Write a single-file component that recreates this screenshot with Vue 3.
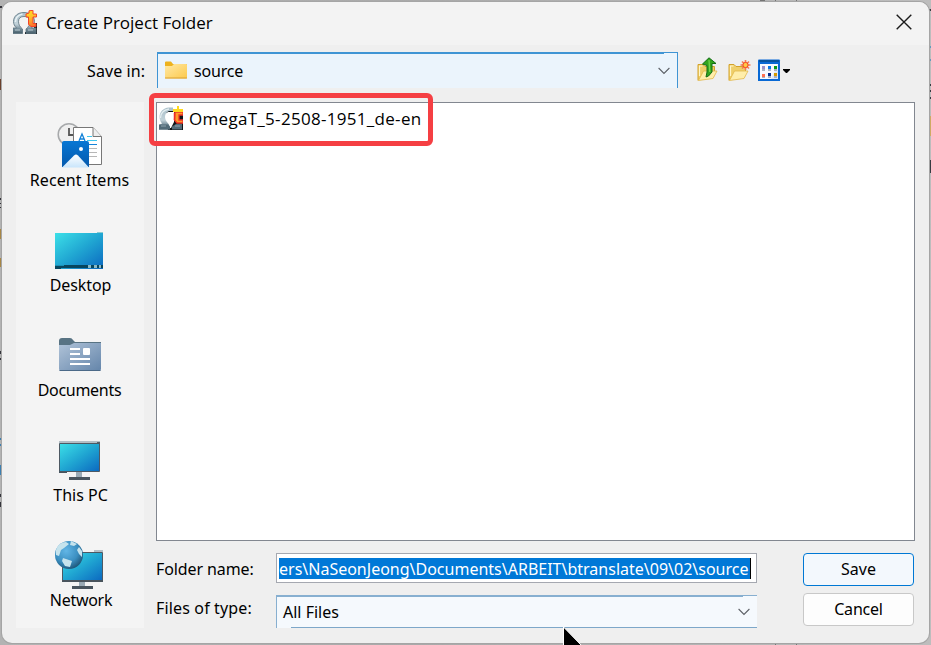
<script setup>
import { ref } from 'vue'

const places = [
  { id: 'recent', label: 'Recent Items' },
  { id: 'desktop', label: 'Desktop' },
  { id: 'documents', label: 'Documents' },
  { id: 'pc', label: 'This PC' },
  { id: 'network', label: 'Network' },
]
const folder = ref('source')
const path = ref('ers\\NaSeonJeong\\Documents\\ARBEIT\\btranslate\\09\\02\\source')
</script>

<template>
  <div class="screen">
    <svg class="backdrop" width="931" height="645" viewBox="0 0 931 645" aria-hidden="true">
      <path d="M0 6h2v2H0zM0 198h2v2H0zM0 203h2v1H0zM0 207h2v1H0zM0 351h2v3H0zM0 358h2v2H0zM0 494h2v3H0zM0 502h2v5H0z" fill="#34343b" />
      <path d="M0 79h2v11H0z" fill="#6b402c" />
      <path d="M0 229h2v10H0zM0 258h2v9H0z" fill="#a78645" />
      <path d="M0 438h1v2H0zM0 444h1v2H0zM0 465h1v10H0z" fill="#3d7fb0" />
      <path d="M929 9h2v2h-2zM929 84h2v2h-2zM929 90h2v2h-2zM929 97h2v2h-2zM929 160h2v13h-2z" fill="#373c42" />
      <path d="M929 46h2v2h-2zM929 59h2v2h-2z" fill="#6699bc" />
      <path d="M929 116h2v20h-2z" fill="#cfaa63" />
      <path d="M760 0h5v2h-5zM775 0h1v2h-1zM796 0h1v2h-1zM775 643h1v2h-1zM796 643h1v2h-1z" fill="#747474" />
    </svg>

    <svg class="defs" width="0" height="0" aria-hidden="true">
      <defs>
        <linearGradient id="screenFill" x1="0" y1="0" x2="1" y2="1">
          <stop offset="0" stop-color="#3ce0e8" /><stop offset=".5" stop-color="#20a6d2" /><stop offset="1" stop-color="#0b68c0" />
        </linearGradient>
        <linearGradient id="folderFill" x1="0" y1="0" x2="1" y2="1">
          <stop offset="0" stop-color="#ffe9a6" /><stop offset="1" stop-color="#fcc94c" />
        </linearGradient>
        <linearGradient id="docFill" x1="0" y1="0" x2="1" y2="1">
          <stop offset="0" stop-color="#b0c3d8" /><stop offset="1" stop-color="#6485aa" />
        </linearGradient>
        <linearGradient id="photoFill" x1="0" y1="0" x2="0" y2="1">
          <stop offset="0" stop-color="#0877d4" /><stop offset="1" stop-color="#0559ad" />
        </linearGradient>
        <linearGradient id="hillFill" x1="0" y1="0" x2="0" y2="1">
          <stop offset="0" stop-color="#ffffff" /><stop offset="1" stop-color="#c9e5fb" />
        </linearGradient>
        <radialGradient id="globeFill" cx=".4" cy=".35" r=".7">
          <stop offset="0" stop-color="#62b6e6" /><stop offset=".6" stop-color="#3b8fc1" /><stop offset="1" stop-color="#1d5273" />
        </radialGradient>
        <linearGradient id="omegaFill" gradientUnits="userSpaceOnUse" x1="0" y1="2" x2="0" y2="24">
          <stop offset="0" stop-color="#a9bfca" /><stop offset=".55" stop-color="#c3d3da" /><stop offset=".75" stop-color="#7c929e" /><stop offset="1" stop-color="#3f5763" />
        </linearGradient>
        <linearGradient id="tFill" gradientUnits="userSpaceOnUse" x1="15" y1="0" x2="22" y2="17">
          <stop offset="0" stop-color="#ffe21a" /><stop offset=".4" stop-color="#ffc02a" /><stop offset="1" stop-color="#f8622a" />
        </linearGradient>
        <symbol id="openFolder" viewBox="0 0 24 24">
          <path d="M1 21.500V5.500h5l2 2h9.500v5" fill="#efcf69" stroke="#d3a129" />
          <path d="M1.500 21.500l5-9.500H20l-4 7.500z" fill="#ffeeaa" stroke="#e2b84a" stroke-width=".8" />
          <path d="M2.500 17V7h3" fill="none" stroke="#fff5c9" stroke-width="1.200" />
        </symbol>
      </defs>
    </svg>

    <main class="dialog">
      <header class="titlebar">
        <svg class="app-icon" width="24" height="24" viewBox="0 0 24 24">
          <path d="M21 13h3v11H12v-2h9z" fill="#15181b" />
          <path d="M0 23.500V18h3.500C1.500 16 .5 14 .5 11.500.5 6 5 2.500 11 2.500S21.500 6 21.500 11.500c0 2.500-1 4.500-3 6.500H23v5.500H13V19c2.500-2 4-4.500 4-7.500 0-3.500-2.500-5-6-5s-5.500 1.500-5.500 5c0 3 1.500 5.500 4 7.500v4.500z" fill="url(#omegaFill)" stroke="#59717d" stroke-width=".8" />
          <path d="M2.500 12c0-4 2.500-7 7-8" fill="none" stroke="#e8f1f4" stroke-width="1.400" />
          <path d="M2 20h5M15 20h5" stroke="#bccdd4" stroke-width="1.200" />
          <path d="M16 3V.8l4-.5V4h3.500v3H20v6.500h3v3h-5l-2.500-2V7H13V4z" fill="url(#tFill)" stroke="#f3432a" stroke-width="1" />
        </svg>
        <h1>Create Project Folder</h1>
        <button class="close" aria-label="Close">
          <svg width="16" height="16" viewBox="0 0 16 16"><path d="M.7.7l14.6 14.6M15.3.7L.7 15.3" fill="none" stroke="#1b1b1b" stroke-width="1.4" /></svg>
        </button>
      </header>

      <section class="location">
        <span class="save-in">Save in:</span>
        <div class="combo lookin">
          <svg width="24" height="20" viewBox="0 0 24 20">
            <path d="M1 1.500q0-1 1-1h5l2 2.500h13q1 0 1 1V9H1z" fill="#edb21f" />
            <path d="M1 5h7l2-2h12q1 0 1 1v12.500q0 1-1 1H2q-1 0-1-1z" fill="url(#folderFill)" />
            <path d="M1 17h22" stroke="#d9a032" />
          </svg>
          <span class="look-text">{{ folder }}</span>
          <svg class="chevron" width="12" height="8" viewBox="0 0 12 8"><path d="M.6 1l5.400 5.400L11.400 1" fill="none" stroke="#5c6066" stroke-width="1.1" /></svg>
        </div>
        <div class="tools">
          <svg width="24" height="26" viewBox="0 0 24 26">
            <use href="#openFolder" x="0" y="2" width="24" height="24" />
            <path d="M12 .8l7 5.700h-4V15l-3.500 4-2.500 1 1-5V8.500L5.500 7z" fill="#32a51d" stroke="#146c17" />
            <path d="M12 3l.8 12" stroke="#74d24d" stroke-width="1.300" />
          </svg>
          <svg width="24" height="26" viewBox="0 0 24 26">
            <use href="#openFolder" x="0" y="2" width="24" height="24" />
            <path d="M17.500 3v10M12.500 8h10M14 4.500l7 7M21 4.500l-7 7" stroke="#f47c55" stroke-width="1.700" />
            <circle cx="17.500" cy="8" r="2.600" fill="#ffc846" stroke="#f44421" />
          </svg>
          <svg class="views" width="34" height="26" viewBox="0 0 34 26">
            <path d="M0 3.500q0-1 1-1h20q1 0 1 1V24H0z" fill="#0869d5" />
            <path d="M1 3h20v2H1z" fill="#07549f" />
            <path d="M2 7h18v15H2z" fill="#f7faff" />
            <path d="M13 22l7-15v15z" fill="#dae9fd" />
            <path d="M4 9h3v3H4z" fill="#9991cb" /><path d="M10 9h3v3h-3z" fill="#0876e6" /><path d="M16 9h3v3h-3z" fill="#079b18" />
            <path d="M4 17h3v3H4z" fill="#ff7251" /><path d="M10 16h3v3h-3z" fill="#082d8b" /><path d="M16 16h3v3h-3z" fill="#d59a00" />
            <path d="M4 12h3v2H4zM10 12h3v2h-3zM16 12h3v2h-3zM4 20h3v1H4zM10 19h3v2h-3zM16 19h3v2h-3z" fill="#a9b3c0" />
            <path d="M25 12h7v1l-3 3h-1l-3-3z" fill="#000" />
          </svg>
        </div>
      </section>

      <section class="content">
        <nav class="places">
          <button v-for="p in places" :key="p.id" class="place">
            <svg width="50" height="50" viewBox="0 0 50 50">
              <g v-if="p.id === 'recent'">
                <circle cx="14" cy="14.500" r="10.800" fill="#efefef" stroke="#a7a9ab" stroke-width="1.500" />
                <path d="M14 8v7h5" fill="none" stroke="#555" stroke-width="1.800" />
                <path d="M18.500 7.500H38l8.500 9V44.500h-28z" fill="#fff" stroke="#777" />
                <path d="M38 7.500V16.500h8.500" fill="#eee" stroke="#777" />
                <path d="M24 21l3-7 3 7M25 19h4" fill="none" stroke="#1683d8" stroke-width="1.300" />
                <path d="M32 16.500h5M32 20.500h10" stroke="#3fc7ee" /><path d="M33 24.500h9" stroke="#1683d8" />
                <path d="M33 28.500h9M33 32.500h9M33 36.500h9" stroke="#b7b7b7" />
                <path d="M7 23q0-2 2-2h23q2 0 2 2v24H7z" fill="url(#photoFill)" />
                <circle cx="26" cy="29" r="2" fill="#fff" />
                <path d="M7 47.500l12-12q2-2 4 0l11 12z" fill="url(#hillFill)" />
              </g>
              <g v-else-if="p.id === 'desktop'">
                <path d="M0 8h48v36H0z" fill="url(#screenFill)" />
                <path d="M0 40h48v3H6v1H0z" fill="#07455e" /><path d="M0 40h9v1H0z" fill="#1a8fb5" />
                <path d="M33 40h3v3h-3zM39 40h3v3h-3zM44 40h2v3h-2z" fill="#8ab8c5" /><path d="M42 7h6v1h-6z" fill="#8bcbd2" />
              </g>
              <g v-else-if="p.id === 'documents'">
                <path d="M4 11q0-3 3-3h8q2 0 3 2l2 2h26v8H4z" fill="#587383" />
                <path d="M4 15h11l4-2h27v26q0 2-2 2H6q-2 0-2-2z" fill="url(#docFill)" />
                <path d="M4.500 40.500h41" stroke="#4c6a88" />
                <path d="M15 19h10M15 24h10M15 29h20M15 34h20" stroke="#fff" stroke-width="2" /><rect x="28" y="18" width="7" height="7" rx="1" fill="#fff" />
              </g>
              <g v-else-if="p.id === 'pc'">
                <path d="M4 6h41v2H4z" fill="#b4bec5" /><path d="M42 7h3v2h-3z" fill="#566069" />
                <path d="M21 37h6v5h7v3H14v-3h7z" fill="#9aaab5" /><path d="M14 42h21v3H14zM4 36h8v2H4z" fill="#48545e" />
                <path d="M4.500 8.500h40v28h-40z" fill="url(#screenFill)" stroke="#4e5963" />
              </g>
              <g v-else>
                <path d="M39 10h9v2h-9z" fill="#b4bec5" />
                <path d="M24 41h6v5h-6z" fill="#9aaab5" /><path d="M17 46h21v3H17z" fill="#48545e" />
                <path d="M7.500 12.500h40v28h-40z" fill="url(#screenFill)" stroke="#4e5963" />
                <path d="M7 40h41v2H7z" fill="#49545d" />
                <circle cx="14" cy="15" r="14" fill="url(#globeFill)" />
                <path d="M1 10Q4 2 11 2l3 2-5 4-3 2-2 6-3-1zM16 1l6 3-3 2-4-1zM24 7l3 4v6l-3-3-2-4zM8 18l9 3-2 6-5-1-3-5z" fill="#c5e3ed" />
              </g>
            </svg>
            <span :class="['place-label', p.id]">{{ p.label }}</span>
          </button>
        </nav>

        <div class="main">
          <div class="files">
            <div class="file">
              <svg width="24" height="24" viewBox="0 0 24 24">
                <path d="M7 5h17v19H9z" fill="#111417" />
                <path d="M6 8l3-2h6v10l-3 6H9l-4-8z" fill="#fff" />
                <path d="M0 23.500V19l3-1.500C1 15 .5 13 .5 11 .5 6 4 2 10 1.500h4V5h-4C7.500 6 6 8 6 11c0 3 2 5 4 7.500l1 5z" fill="url(#omegaFill)" />
                <path d="M1.500 12C1.500 7 4.500 4 10 3" fill="none" stroke="#e3edf0" stroke-width="1.300" />
                <path d="M0 18.500h9l2 2v3H0zM13 23.500v-3l4-2.500h6v5.500z" fill="#526b78" />
                <path d="M2 20h5M16 20h5" stroke="#8da3ae" stroke-width="1.200" />
                <path d="M16 6h8v3h-4v5h4v3h-6l-2.500-3z" fill="#fd9a2c" stroke="#ee3328" stroke-width="1.300" />
                <path d="M14 3h4V0h2v3h4v3H14z" fill="#ffd91e" />
                <path d="M15.500 7v7" stroke="#ee2c28" stroke-width="1.500" />
              </svg>
              <span class="file-name">OmegaT_5-2508-1951_de-en</span>
            </div>
          </div>
          <div class="form">
            <div class="labels">
              <label class="folder-label">Folder name:</label>
              <label class="type-label">Files of type:</label>
            </div>
            <div class="fields">
              <div class="name-field"><span class="selection"><span class="path-text">{{ path }}</span></span></div>
              <div class="combo type-combo">
                <span class="all-files">All Files</span>
                <svg class="chevron" width="12" height="8" viewBox="0 0 12 8"><path d="M.6 1l5.400 5.400L11.400 1" fill="none" stroke="#5c6066" stroke-width="1.1" /></svg>
              </div>
            </div>
            <div class="actions">
              <button class="action primary"><span>Save</span></button>
              <button class="action"><span class="cancel">Cancel</span></button>
            </div>
          </div>
        </div>
      </section>
    </main>

    <div class="highlight"></div>
    <svg class="cursor" width="22" height="19" viewBox="0 0 22 19"><path d="M.5 0v19h18.500z" fill="#000" stroke="#fff" /></svg>
  </div>
</template>

<style>
body { margin: 0; overflow: hidden; }
</style>

<style scoped>
* { box-sizing: border-box; }
.screen { position: relative; width: 931px; height: 645px; padding: 2px; overflow: hidden; background: linear-gradient(90deg, #b3b3b3, #a9a9a9 45%, #bdbdbd); font-family: "Noto Sans", sans-serif; font-size: 16px; color: #000; }
.backdrop { position: absolute; left: 0; top: 0; }
.defs { position: absolute; }
.dialog { position: relative; width: 927px; height: 641px; overflow: hidden; border-radius: 10px; background: #efefef; box-shadow: 0 0 0 1px #a5a5a5; }
.titlebar { display: flex; align-items: center; height: 43px; padding: 0 17px 3px 11px; background: #f3f3f3; }
h1 { flex: 1; margin: 0 0 0 9px; font: 400 17px "Open Sans", sans-serif; color: #000; white-space: nowrap; }
button { font: inherit; color: inherit; }
.close { display: flex; padding: 0; border: 0; background: transparent; }
.location { display: flex; align-items: center; height: 57px; padding: 7px 0 14px; }
.save-in { width: 155px; padding: 1px 0 0 85px; letter-spacing: .1px; white-space: nowrap; }
.combo { display: flex; align-items: center; }
.lookin { width: 521px; height: 36px; padding: 1px 7px 0 6px; border: 1px solid #3f94d4; border-bottom: 0; background: linear-gradient(#3f94d4, #3f94d4) 0 0 / 506px 1px no-repeat #ebf4fc; }
.look-text { margin: 0 0 1px 6px; letter-spacing: -.2px; }
.chevron { margin-left: auto; }
.tools { display: flex; gap: 7px; margin-left: 19px; }
.tools .views { margin-left: -1px; }
.content { display: flex; gap: 12px; padding-left: 14px; }
.places { width: 128px; height: 526px; padding-top: 18px; background: #f4f4f4; }
.place { display: flex; flex-direction: column; align-items: center; width: 100%; height: 105px; padding: 0; border: 0; background: transparent; }
.place-label { height: 20px; line-height: 20px; white-space: nowrap; }
.place-label.recent { padding-right: 1px; letter-spacing: .1px; }
.place-label.desktop { padding-left: 1px; letter-spacing: -.1px; }
.place-label.documents { padding-right: 1px; letter-spacing: -.3px; }
.place-label.pc { padding-left: 1px; }
.place-label.network { padding-left: 2px; letter-spacing: -.3px; }
.main { width: 759px; }
.files { height: 439px; padding: 2px 2px; border: 1px solid #828790; background: #fff; }
.file { display: flex; align-items: center; gap: 6px; height: 26px; font-family: "Open Sans", sans-serif; font-size: 17px; letter-spacing: .3px; white-space: nowrap; }
.form { display: flex; padding-top: 12px; }
.labels { width: 120px; }
.labels label { display: block; height: 39px; line-height: 32px; white-space: nowrap; }
.folder-label { letter-spacing: -.1px; }
.type-label { letter-spacing: .15px; }
.fields { width: 481px; }
.name-field { height: 30px; padding: 4px 5px 3px 2px; border: 1px solid #a5a8b0; background: #fff; }
.selection { display: block; width: 472px; height: 21px; line-height: 22px; overflow: hidden; color: #fff; background: #0078d7; border-right: 1px solid #000; white-space: nowrap; }
.type-combo { height: 33px; margin-top: 12px; padding: 0 7px 0 6px; border: 1px solid #87afd0; border-width: 1px 0 0 1px; background: linear-gradient(#87afd0, #87afd0) 0 0 / 466px 1px no-repeat, linear-gradient(#7da7c9, #7da7c9) 14px 100% / 466px 1px no-repeat #f5f9fd; }
.actions { display: flex; flex-direction: column; gap: 7px; width: 111px; margin-left: 46px; }
.action { height: 33px; padding: 0 0 2px; border: 1px solid #c8c8c8; border-radius: 4px; background: #fdfdfd; }
.primary { border-color: #0078d4; background: #f3f8fd; }
.cancel { letter-spacing: -.2px; }
.highlight { position: absolute; left: 149px; top: 92.5px; width: 283.500px; height: 53px; border: 5px solid #f53f43; border-radius: 6px; }
.cursor { position: absolute; left: 563px; top: 627px; }
</style>
